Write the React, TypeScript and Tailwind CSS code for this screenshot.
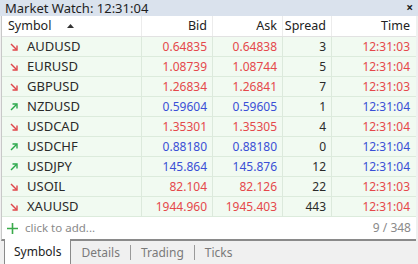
import React from "react";

type Row = { s: string; up: boolean; bid: string; ask: string; spread: string; time: string; c: "r" | "b" };

const rows: Row[] = [
  { s: "AUDUSD", up: false, bid: "0.64835", ask: "0.64838", spread: "3", time: "12:31:03", c: "r" },
  { s: "EURUSD", up: false, bid: "1.08739", ask: "1.08744", spread: "5", time: "12:31:04", c: "r" },
  { s: "GBPUSD", up: false, bid: "1.26834", ask: "1.26841", spread: "7", time: "12:31:03", c: "r" },
  { s: "NZDUSD", up: true, bid: "0.59604", ask: "0.59605", spread: "1", time: "12:31:04", c: "b" },
  { s: "USDCAD", up: false, bid: "1.35301", ask: "1.35305", spread: "4", time: "12:31:04", c: "r" },
  { s: "USDCHF", up: true, bid: "0.88180", ask: "0.88180", spread: "0", time: "12:31:04", c: "b" },
  { s: "USDJPY", up: true, bid: "145.864", ask: "145.876", spread: "12", time: "12:31:04", c: "b" },
  { s: "USOIL", up: false, bid: "82.104", ask: "82.126", spread: "22", time: "12:31:03", c: "r" },
  { s: "XAUUSD", up: false, bid: "1944.960", ask: "1945.403", spread: "443", time: "12:31:04", c: "r" },
];

function Arrow({ up }: { up: boolean }) {
  const col = up ? "#2aa84a" : "#e0454a";
  return up ? (
    <svg width="8" height="8" viewBox="0 0 8 8">
      <path d="M1 7 L6.5 1.5" stroke={col} strokeWidth="1.4" fill="none" />
      <path d="M2.5 1 H7 V5.5" stroke={col} strokeWidth="1.4" fill="none" />
    </svg>
  ) : (
    <svg width="8" height="8" viewBox="0 0 8 8">
      <path d="M1 1 L6.5 6.5" stroke={col} strokeWidth="1.4" fill="none" />
      <path d="M2.5 7 H7 V2.5" stroke={col} strokeWidth="1.4" fill="none" />
    </svg>
  );
}

export default function App() {
  const font = { fontFamily: '"Noto Sans", "Open Sans", sans-serif' };
  return (
    <div className="w-[418px] h-[264px] bg-[#f0f0f0] flex flex-col text-[12px] text-[#222] overflow-hidden" style={font}>
      <div className="h-[16px] bg-[#dae2ed] flex items-center justify-between pl-[5px] pr-[5px]">
        <span className="text-[13px] leading-[16px] text-[#1e1e1e]">Market Watch: 12:31:04</span>
        <span className="text-[12px] leading-[16px] font-bold text-[#222]">×</span>
      </div>
      <div className="h-[225px] w-[415px] ml-[1px] bg-white border-l border-[#c8c8c8] border-b-2 border-b-[#8a8a8a] flex flex-col">
        <div className="grid grid-cols-[140px_71px_70px_49px_83px] h-[21px] border-b border-[#e2e2e2] items-center text-[12.5px]">
          <div className="flex items-center pl-[6px] border-r border-[#ececec] h-full">
            <span>Symbol</span>
            <svg width="7" height="4" viewBox="0 0 7 4" className="ml-[16px]"><path d="M0 4 L3.5 0 L7 4Z" fill="#333" /></svg>
          </div>
          <div className="text-right pr-[5px] border-r border-[#ececec] h-full flex items-center justify-end">Bid</div>
          <div className="text-right pr-[5px] border-r border-[#ececec] h-full flex items-center justify-end">Ask</div>
          <div className="text-right pr-[5px] border-r border-[#ececec] h-full flex items-center justify-end">Spread</div>
          <div className="text-right pr-[5px] h-full flex items-center justify-end">Time</div>
        </div>
        {rows.map((r) => {
          const pc = r.c === "r" ? "text-[#e5484b]" : "text-[#3a4fd6]";
          return (
            <div key={r.s} className="grid grid-cols-[140px_71px_70px_49px_83px] h-[20px] bg-[#f1faf1] border-b border-[#dcebdc] items-center">
              <div className="flex items-center h-full border-r border-[#dce9dc] pl-[8px]">
                <Arrow up={r.up} />
                <span className="ml-[9px] text-[13px] text-[#2a2a2a]">{r.s}</span>
              </div>
              <div className={`h-full flex items-center justify-end pr-[5px] border-r border-[#dce9dc] ${pc}`}>{r.bid}</div>
              <div className={`h-full flex items-center justify-end pr-[5px] border-r border-[#dce9dc] ${pc}`}>{r.ask}</div>
              <div className="h-full flex items-center justify-end pr-[5px] border-r border-[#dce9dc] text-[#2a2a2a]">{r.spread}</div>
              <div className={`h-full flex items-center justify-end pr-[5px] ${pc}`}>{r.time}</div>
            </div>
          );
        })}
        <div className="flex-1 flex items-center justify-between pl-[5px] pr-[5px]">
          <div className="flex items-center">
            <svg width="11" height="11" viewBox="0 0 11 11"><path d="M5.5 0 V11 M0 5.5 H11" stroke="#3aaa4a" strokeWidth="1.6" /></svg>
            <span className="ml-[7px] text-[#8a8a8a] text-[11.5px]">click to add...</span>
          </div>
          <span className="text-[#8a8a8a]">9 / 348</span>
        </div>
      </div>
      <div className="flex-1 flex items-stretch pl-[4px] text-[12px] text-[#7a7a7a]">
        <div className="bg-white border-l border-r border-[#8a8a8a] px-[9px] flex items-center text-[#222] -mt-[2px]">Symbols</div>
        <div className="flex items-center pl-[10px]">Details</div>
        <div className="flex items-center mx-[10px]"><div className="w-px h-[15px] bg-[#9a9a9a]" /></div>
        <div className="flex items-center">Trading</div>
        <div className="flex items-center mx-[10px]"><div className="w-px h-[15px] bg-[#9a9a9a]" /></div>
        <div className="flex items-center">Ticks</div>
      </div>
    </div>
  );
}
